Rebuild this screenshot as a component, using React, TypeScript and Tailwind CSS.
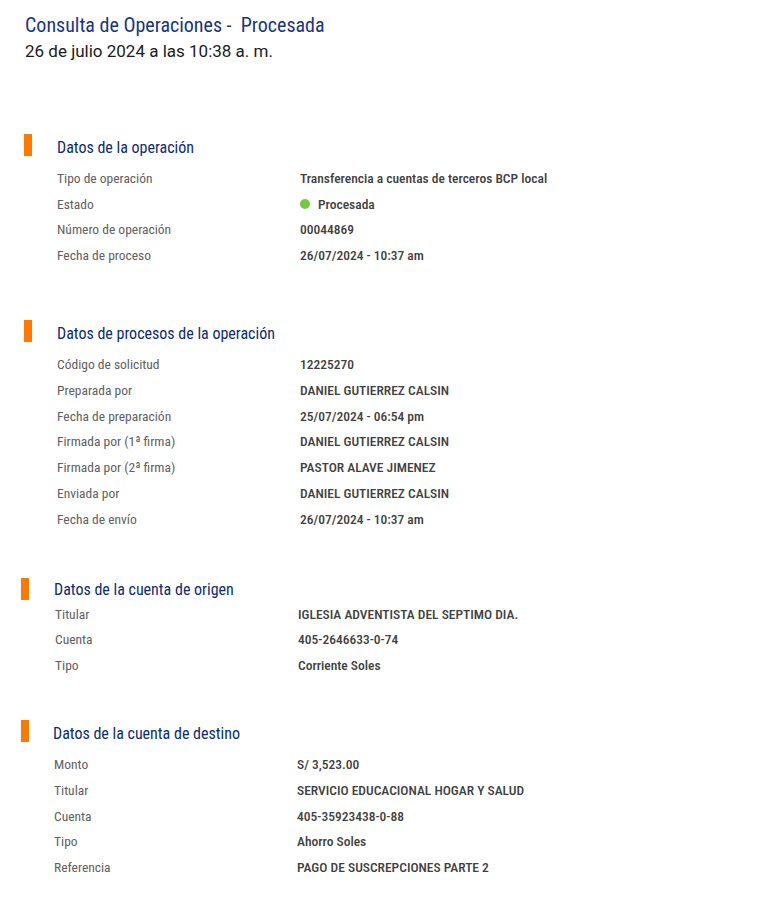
type Row = { label: string; value: string; status?: boolean };

interface Section {
  title: string;
  rows: Row[];
  wrapClass: string; // outer spacing + left offset
  headGap: string; // gap between orange bar and heading
  headClass: string; // vertical nudge of the heading text
  rowsClass: string; // rows offset
  labelWidth: string;
}

const sections: Section[] = [
  {
    title: 'Datos de la operación',
    wrapClass: 'mt-[72px] pl-[24px]',
    headGap: 'gap-[25px]',
    headClass: 'mt-[3px]',
    rowsClass: 'mt-[6px] pl-[33px]',
    labelWidth: 'w-[243px]',
    rows: [
      { label: 'Tipo de operación', value: 'Transferencia a cuentas de terceros BCP local' },
      { label: 'Estado', value: 'Procesada', status: true },
      { label: 'Número de operación', value: '00044869' },
      { label: 'Fecha de proceso', value: '26/07/2024 - 10:37 am' },
    ],
  },
  {
    title: 'Datos de procesos de la operación',
    wrapClass: 'mt-[52px] pl-[24px]',
    headGap: 'gap-[25px]',
    headClass: 'mt-[3px]',
    rowsClass: 'mt-[6px] pl-[33px]',
    labelWidth: 'w-[243px]',
    rows: [
      { label: 'Código de solicitud', value: '12225270' },
      { label: 'Preparada por', value: 'DANIEL GUTIERREZ CALSIN' },
      { label: 'Fecha de preparación', value: '25/07/2024 - 06:54 pm' },
      { label: 'Firmada por (1ª firma)', value: 'DANIEL GUTIERREZ CALSIN' },
      { label: 'Firmada por (2ª firma)', value: 'PASTOR ALAVE JIMENEZ' },
      { label: 'Enviada por', value: 'DANIEL GUTIERREZ CALSIN' },
      { label: 'Fecha de envío', value: '26/07/2024 - 10:37 am' },
    ],
  },
  {
    title: 'Datos de la cuenta de origen',
    wrapClass: 'mt-[46px] pl-[21px]',
    headGap: 'gap-[25px]',
    headClass: 'mt-[1px]',
    rowsClass: 'mt-[0px] pl-[34px]',
    labelWidth: 'w-[243px]',
    rows: [
      { label: 'Titular', value: 'IGLESIA ADVENTISTA DEL SEPTIMO DIA.' },
      { label: 'Cuenta', value: '405-2646633-0-74' },
      { label: 'Tipo', value: 'Corriente Soles' },
    ],
  },
  {
    title: 'Datos de la cuenta de destino',
    wrapClass: 'mt-[42px] pl-[21px]',
    headGap: 'gap-[24px]',
    headClass: 'mt-[3px]',
    rowsClass: 'mt-[6px] pl-[33px]',
    labelWidth: 'w-[243px]',
    rows: [
      { label: 'Monto', value: 'S/ 3,523.00' },
      { label: 'Titular', value: 'SERVICIO EDUCACIONAL HOGAR Y SALUD' },
      { label: 'Cuenta', value: '405-35923438-0-88' },
      { label: 'Tipo', value: 'Ahorro Soles' },
      { label: 'Referencia', value: 'PAGO DE SUSCREPCIONES PARTE 2' },
    ],
  },
];

function DataSection({ section }: { section: Section }) {
  return (
    <section className={section.wrapClass}>
      {/* header: orange marker + title */}
      <div className={`flex items-start ${section.headGap}`}>
        <span className="block w-[8px] h-[22px] bg-[#ff7800] shrink-0" />
        <h2 className={`text-[16px] leading-[22px] text-[#0c2b74] ${section.headClass}`}>{section.title}</h2>
      </div>

      <div className={section.rowsClass}>
        {section.rows.map((row) => (
          <div key={row.label + row.value} className="flex items-center h-[25.8px] text-[13.5px]">
            <span className={`${section.labelWidth} shrink-0 text-[#606060]`}>{row.label}</span>
            {row.status ? (
              <span className="flex items-center gap-[8px] text-[#404040] font-medium">
                <span className="block w-[10px] h-[10px] rounded-full bg-[#76c93a]" />
                {row.value}
              </span>
            ) : (
              <span className="text-[#404040] font-medium">{row.value}</span>
            )}
          </div>
        ))}
      </div>
    </section>
  );
}

export default function App() {
  return (
    <div className="w-[759px] min-h-[899px] bg-white font-['Roboto',sans-serif] [font-stretch:condensed]">
      <header className="pt-[13px] pl-[25px]">
        <h1 className="text-[20px] leading-[24px] text-[#173584] whitespace-pre">Consulta de Operaciones -  Procesada</h1>
        <p className="mt-[3px] text-[17px] leading-[22px] text-[#1b1b1b] [font-stretch:normal]">26 de julio 2024 a las 10:38 a. m.</p>
      </header>

      {sections.map((s) => (
        <DataSection key={s.title} section={s} />
      ))}
    </div>
  );
}
